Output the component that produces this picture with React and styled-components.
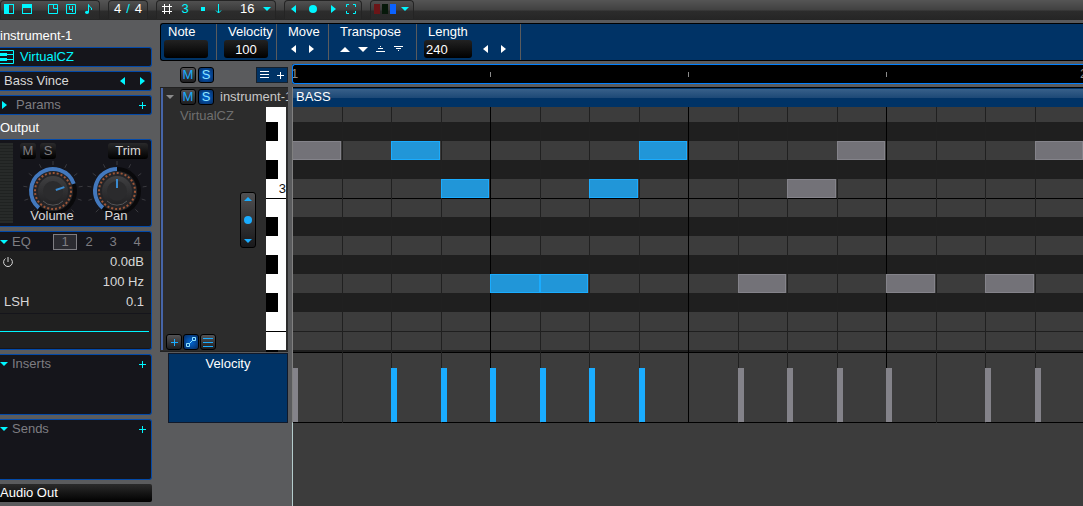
import React from 'react';
import styled, { createGlobalStyle, css, ThemeProvider } from 'styled-components';

const theme = {
  fontFamily: '"Liberation Sans", Arial, sans-serif',
  colorFrame: '#5a5b5d',
  colorNavy: '#003366',
  colorPanel: '#15151b',
  colorPanelBorder: '#0349a8',
  colorCyan: '#00f6ff',
  colorSky: '#1aacff',
  colorMuted: '#7e7d82',
  colorLane: '#3c3c3c',
  colorLaneDark: '#1f1f1f'
};

const GlobalStyle = createGlobalStyle`
  * {
    box-sizing: border-box;
  }

  body {
    margin: 0;
    background: #5a5b5d;
  }

  button,
  input,
  select {
    margin: 0;
    padding: 0;
    border: 0;
    background: none;
    color: inherit;
    font: inherit;
  }

  svg {
    display: block;
    flex: none;
  }
`;

const STEP_COUNT = 24;
const BEAT_WIDTH = 198;
const stepX = step => Math.round((step * BEAT_WIDTH) / 4);

const lanes = [
  { height: 15 },
  { height: 19, dark: true },
  { height: 19 },
  { height: 19, dark: true },
  { height: 20, line: '#000' },
  { height: 18 },
  { height: 19, dark: true },
  { height: 19 },
  { height: 19, dark: true },
  { height: 19 },
  { height: 19, dark: true },
  { height: 20, line: '#1f1f1f' },
  { height: 18 },
  { height: 2, dark: true }
];

const notes = [
  { step: 0, lane: 2 },
  { step: 2, lane: 2, active: true },
  { step: 3, lane: 4, active: true },
  { step: 4, lane: 9, active: true, tied: true },
  { step: 5, lane: 9, active: true },
  { step: 6, lane: 4, active: true },
  { step: 7, lane: 2, active: true },
  { step: 9, lane: 9 },
  { step: 10, lane: 4 },
  { step: 11, lane: 2 },
  { step: 12, lane: 9 },
  { step: 14, lane: 9 },
  { step: 15, lane: 2 }
];

const laneTop = index =>
  lanes.slice(0, index).reduce((sum, lane) => sum + lane.height, 0);

const App = styled.div`
  display: flex;
  flex-direction: column;
  min-height: 100vh;
  overflow: hidden;
  background: ${props => props.theme.colorFrame};
  color: #fff;
  font-family: ${props => props.theme.fontFamily};
  font-size: 13px;
  line-height: 16px;
`;

/* transport bar */

const TopBar = styled.header`
  display: flex;
  gap: 8px;
  height: 20px;
  background: linear-gradient(#555 0, #414141 10px, #2c2c2c 11px, #252525 20px);
`;

const ToolGroup = styled.div`
  display: flex;
  align-items: center;
  gap: ${props => props.$gap || 0}px;
  width: ${props => props.$width}px;
  height: 19px;
  padding: 0 0 2px ${props => props.$pad || 0}px;
  border: solid #242424;
  border-width: 1px 1px 0;
  border-radius: 4px 4px 0 0;
  background: linear-gradient(#505050, #3c3c3c 9px, #2c2c2c 10px, #292929);
  color: ${props => props.theme.colorCyan};
`;

const Cluster = styled.div`
  display: flex;
  align-items: center;
  gap: 8px;
`;

const ToolButton = styled.button`
  display: flex;
  align-items: center;
  justify-content: center;
  width: ${props => props.$width || 10}px;
  height: 16px;
  color: ${props => (props.$light ? '#fff' : 'inherit')};
`;

const White = styled.span`
  color: #fff;
`;

const GridSelect = styled.label`
  display: flex;
  align-items: center;
  gap: 7px;
  padding-left: 14px;

  select {
    width: 16px;
    appearance: none;
    color: #fff;
  }
`;

const Swatch = styled.span`
  width: 6px;
  height: 10px;
  background: ${props => props.$color};
`;

const DotMark = styled.i`
  width: 4px;
  height: 4px;
  background: currentColor;
`;

const Swatches = styled.button`
  display: flex;
  align-items: center;
  gap: 2px;
`;

/* page body */

const Body = styled.div`
  display: flex;
  flex: 1;
  gap: 8px;
`;

const Inspector = styled.aside`
  display: flex;
  flex-direction: column;
  gap: 4px;
  flex: none;
  width: 152px;
  padding: 7px 0 4px;
`;

const Heading = styled.div`
  height: 16px;
  line-height: 18px;
`;

const Panel = styled.section`
  height: ${props => props.$height}px;
  border: 1px solid ${props => props.theme.colorPanelBorder};
  border-left: 0;
  border-radius: 0 3px 3px 0;
  background: ${props => props.theme.colorPanel};
`;

const PanelRow = styled.div`
  display: flex;
  align-items: center;
  height: 18px;
  padding: 0 5px 0 ${props => props.$pad || 0}px;
  gap: ${props => props.$gap || 0}px;
  color: ${props => (props.$muted ? props.theme.colorMuted : '#d8d8d8')};
  line-height: 18px;
`;

const CyanButton = styled.button`
  display: flex;
  align-items: center;
  justify-content: center;
  width: ${props => props.$width || 8}px;
  height: 16px;
  color: ${props => (props.$light ? '#d8d8d8' : props.theme.colorCyan)};
`;

const NameButton = styled.button`
  color: ${props => props.theme.colorCyan};
`;

const Spring = styled.span`
  flex: 1;
`;

const OutputPanel = styled(Panel)`
  display: flex;
  gap: 7px;
  padding: 3px 3px 3px 0;
`;

const Meter = styled.div`
  width: 13px;
  background: repeating-linear-gradient(#272a29 0 2px, #1f2221 2px 3px);
`;

const OutputControls = styled.div`
  flex: 1;
`;

const ButtonRow = styled.div`
  display: flex;
  gap: 4px;
`;

const DarkButton = styled.button`
  width: ${props => props.$width || 16}px;
  height: 16px;
  border-radius: 3px;
  background: linear-gradient(#29292b, #000);
  color: ${props => (props.$width ? '#d8d8d8' : props.theme.colorMuted)};
  line-height: 16px;
`;

const Knobs = styled.div`
  display: flex;
  gap: 4px;
  padding: 2px 0 0 3px;
`;

const KnobLabel = styled.label`
  position: relative;
  width: 60px;
  text-align: center;
  color: #d8d8d8;
  line-height: 18px;

  svg {
    overflow: visible;
  }

  input {
    position: absolute;
    inset: 0;
    width: 100%;
    height: 100%;
    opacity: 0;
  }

  span {
    display: block;
    position: relative;
    margin-right: 2px;
  }
`;

const Band = styled.button`
  width: 24px;
  height: 16px;
  line-height: 14px;
  color: ${props => props.theme.colorMuted};
  ${props =>
    props.$active &&
    css`
      border: 1px solid #7e7d82;
      background: #2b2b31;
    `}
`;

const EqHeader = styled(PanelRow)`
  height: 19px;
  padding-right: 2px;
`;

const EqBody = styled.div`
  height: 62px;
  padding: 1px 7px 0 4px;
  background: #202020;
`;

const EqRow = styled.div`
  display: flex;
  align-items: center;
  justify-content: space-between;
  height: 20px;
  color: #d8d8d8;
`;

const EqCurve = styled.div`
  display: flex;
  align-items: center;
  height: 34px;
  margin-top: 1px;
  padding-right: 2px;
  background: #202020;

  hr {
    width: 100%;
    margin: 0;
    border: 0;
    border-top: 1px solid ${props => props.theme.colorCyan};
  }
`;

const AudioOut = styled.button`
  height: 18px;
  border-radius: 0 2px 2px 0;
  background: linear-gradient(#2b2b2b, #000);
  line-height: 18px;
  text-align: left;
`;

const Main = styled.main`
  display: flex;
  flex-direction: column;
  flex: 1;
  min-width: 0;
  padding-top: 3px;
`;

/* note edit bar */

const EditBar = styled.div`
  display: flex;
  height: 38px;
  border: 1px solid #000;
  border-right: 0;
  border-radius: 3px 0 0 3px;
  background: ${props => props.theme.colorNavy};
`;

const EditSection = styled.div`
  width: ${props => props.$width}px;
  padding: 0 3px;
  border-right: 1px solid ${props => props.theme.colorFrame};
`;

const EditLabel = styled.label`
  display: block;
  padding-left: ${props => props.$pad}px;
  white-space: nowrap;
`;

const EditInput = styled.input`
  display: block;
  width: ${props => props.$width || 44}px;
  height: 18px;
  margin-left: ${props => props.$indent || 0}px;
  padding: 0 2px;
  border-radius: 3px;
  background: linear-gradient(#222, #000);
  text-align: ${props => props.$align || 'center'};
`;

const EditButtons = styled.div`
  display: flex;
  align-items: center;
  height: 18px;
  padding-left: ${props => props.$indent || 0}px;
`;

const EditButton = styled.button`
  display: flex;
  align-items: center;
  justify-content: center;
  flex: none;
  width: 18px;
  height: 16px;
`;

/* tracks */

const Workspace = styled.div`
  display: grid;
  grid-template-columns: 128px minmax(0, 1fr);
  column-gap: 4px;
  flex: 1;
  padding-top: 3px;
`;

const TrackColumn = styled.div`
  display: flex;
  flex-direction: column;
`;

const MasterRow = styled.div`
  display: flex;
  align-items: center;
  gap: 2px;
  height: 20px;
  margin: 1px 0 2px;
  padding-left: 20px;
`;

const SquareButton = styled.button`
  display: flex;
  align-items: center;
  justify-content: center;
  flex: none;
  width: 16px;
  height: 16px;
  border: 1px solid #000;
  border-radius: 3px;
  background: ${props =>
    props.$lit
      ? 'radial-gradient(#0068d8, #073674 80%)'
      : 'linear-gradient(#535355, #1d1d1f)'};
  color: ${props => (props.$lit ? '#8fe4ff' : props.theme.colorSky)};
`;

const MenuButton = styled.button`
  display: flex;
  align-items: center;
  justify-content: center;
  gap: 6px;
  width: 32px;
  height: 16px;
  margin-left: auto;
  border: 1px solid #15202c;
  background: ${props => props.theme.colorNavy};
`;

const TrackPanel = styled.section`
  display: flex;
  height: 265px;
  padding: 0 2px 1px 1px;
  background: #2c2c2c;
  border: solid #222;
  border-width: 1px 0;
`;

const TrackInfo = styled.div`
  display: flex;
  flex-direction: column;
  flex: 1;
  min-width: 0;
  border-left: 2px solid #4665a8;
  padding: 1px 0 0 3px;
  color: #c8c8c8;
`;

const TrackTitle = styled.div`
  display: flex;
  align-items: center;
  gap: 2px;
  width: 122px;
  overflow: hidden;
  white-space: nowrap;

  span {
    padding-left: 4px;
  }
`;

const FoldButton = styled.button`
  display: flex;
  align-items: center;
  flex: none;
  width: 12px;
  height: 16px;
  color: #8b8b8b;
`;

const DeviceName = styled.div`
  padding: 3px 0 0 14px;
  color: #6f6f6f;
`;

const ZoomPad = styled.div`
  display: flex;
  flex-direction: column;
  align-items: center;
  justify-content: space-between;
  align-self: flex-end;
  width: 16px;
  height: 56px;
  margin: 68px 10px auto;
  padding: 4px 0;
  border: 1px solid #000;
  border-radius: 3px;
  background: linear-gradient(#505052, #19191b);
  color: ${props => props.theme.colorSky};
`;

const TrackTools = styled.div`
  display: flex;
  gap: 1px;
`;

const Keyboard = styled.div`
  flex: none;
  width: 20px;
  margin-top: 19px;
  background: #fff;
`;

const Key = styled.div`
  display: flex;
  align-items: center;
  justify-content: flex-end;
  width: ${props => (props.$dark ? 12 : 20)}px;
  height: ${props => props.$height}px;
  border-bottom: ${props => (props.$line ? '1px solid #000' : 0)};
  background: ${props => (props.$dark ? '#000' : '#fff')};
  color: #111;
`;

const VelocityLabel = styled.div`
  height: 70px;
  margin: 1px 0 0 8px;
  padding: 2px;
  border: 1px solid #10192a;
  background: ${props => props.theme.colorNavy};
  text-align: center;
`;

const Timeline = styled.div`
  position: relative;
  display: flex;
  flex-direction: column;
  background: ${props => props.theme.colorLane};
`;

const Ruler = styled.div`
  position: relative;
  height: 20px;
  overflow: hidden;
  border: 1px solid #0080ff;
  border-right: 0;
  border-radius: 3px 0 0 3px;
  background: #000;
  color: #8b8b8b;
`;

const RulerMark = styled.span`
  position: absolute;
  top: 1px;
  left: ${props => props.$x}px;
`;

const RulerTick = styled.i`
  position: absolute;
  top: 7px;
  left: ${props => props.$x - 1}px;
  width: 1px;
  height: 5px;
  background: #8b8b8b;
`;

const ClipHeader = styled.div`
  height: 23px;
  padding: 2px 0 0 4px;
  border-top: 3px solid ${props => props.theme.colorFrame};
  background: linear-gradient(
    #000 1px,
    #003366 1px 2px,
    #386089 2px,
    #1c4876 11px,
    #003366 11px
  );
`;

const Roll = styled.div`
  position: relative;
  overflow: hidden;
`;

const Lane = styled.div`
  height: ${props => props.$height}px;
  border-bottom: ${props => (props.$line ? `1px solid ${props.$line}` : 0)};
  background: ${props =>
    props.$dark ? props.theme.colorLaneDark : props.theme.colorLane};
`;

const VelocityLane = styled.div`
  height: 71px;
  border: solid #000;
  border-width: 1px 0;
`;

const StepLine = styled.i`
  position: absolute;
  top: 0;
  bottom: 0;
  left: ${props => props.$x}px;
  width: 1px;
  background: ${props => (props.$beat ? '#000' : '#202020')};
`;

const Note = styled.div`
  position: absolute;
  top: ${props => props.$y}px;
  left: ${props => props.$x}px;
  width: ${props => props.$width}px;
  height: 19px;
  border: 1px solid ${props => (props.$active ? '#1aacff' : '#84838a')};
  background: ${props => (props.$active ? '#2196d8' : '#737278')};
`;

const VelocityBar = styled.div`
  position: absolute;
  bottom: 1px;
  left: ${props => props.$x}px;
  width: 6px;
  height: 54px;
  background: ${props => (props.$active ? '#1aacff' : '#84838a')};
`;

const Playhead = styled.i`
  position: absolute;
  z-index: 1;
  top: 23px;
  bottom: 0;
  left: 0;
  width: 1px;
  background: linear-gradient(#808080 335px, #b4cccc 336px);
`;

/* glyphs */

const shapes = {
  left: [5, 8, '5,0 5,8 0,4'],
  right: [5, 8, '0,0 5,4 0,8'],
  up: [10, 5, '5,0 10,5 0,5'],
  down: [8, 4, '0,0 8,0 4,4'],
  upSmall: [8, 4, '4,0 8,4 0,4'],
  downWide: [10, 5, '0,0 10,0 5,5']
};

const Arrow = ({ shape }) => {
  const [w, h, points] = shapes[shape];
  return (
    <svg width={w} height={h} aria-hidden="true">
      <polygon points={points} fill="currentColor" />
    </svg>
  );
};

const Lines = ({ size = 10, d }) => (
  <svg
    width={size}
    height={size}
    fill="none"
    stroke="currentColor"
    aria-hidden="true"
  >
    <path d={d} />
  </svg>
);

const Dot = () => (
  <svg width="8" height="8" aria-hidden="true">
    <circle cx="4" cy="4" r="4" fill="currentColor" />
  </svg>
);

const Plus = () => <Lines size={8} d="M1 4.5H8M4.5 1V8" />;

const PanelIcon = ({ fill }) => (
  <svg width="10" height="10" aria-hidden="true">
    <rect x="0.5" y="0.5" width="9" height="9" fill="none" stroke="currentColor" />
    <path d={fill} fill="currentColor" />
  </svg>
);

const NoteIcon = () => (
  <svg width="8" height="10" aria-hidden="true">
    <path
      d="M3.5 8V0.5L4.5 2.5 6.5 4V6"
      fill="none"
      stroke="currentColor"
      strokeWidth="1"
    />
    <ellipse cx="2" cy="8.3" rx="2" ry="1.6" fill="currentColor" />
  </svg>
);

const KeysIcon = () => (
  <svg width="14" height="14" aria-hidden="true">
    <path
      d="M0 0.5H13.5V13.5H0M0 4.5H13M0 9.5H13"
      fill="none"
      stroke="currentColor"
    />
    <path d="M0 3h7v3H0zM0 8h7v3H0z" fill="currentColor" />
  </svg>
);

const polar = (angle, radius) => {
  const rad = (angle * Math.PI) / 180;
  return [30 + radius * Math.sin(rad), 30 - radius * Math.cos(rad)];
};

const Knob = ({ name, angle, value }) => {
  const [x0, y0] = polar(-140, 22);
  const [x1, y1] = polar(angle, 22);
  const [px, py] = polar(angle, 3);
  const [qx, qy] = polar(angle, 12);
  const ticks = Array.from({ length: 11 }, (_, i) => -135 + i * 27);

  return (
    <KnobLabel>
      <svg width="60" height="46" aria-hidden="true">
        <defs>
          <linearGradient id={`face-${name}`} x1="0" y1="0" x2="0" y2="1">
            <stop offset="0" stopColor="#404042" />
            <stop offset="1" stopColor="#202022" />
          </linearGradient>
        </defs>
        {ticks.map(tick => {
          const [ax, ay] = polar(tick, 26);
          const [bx, by] = polar(tick, 30);
          return (
            <line key={tick} x1={ax} y1={ay} x2={bx} y2={by} stroke="#3a3a3f" />
          );
        })}
        <circle cx="30" cy="30" r="24" fill="#09090b" />
        <circle cx="30" cy="30" r="20" fill="#242427" />
        <circle
          cx="30"
          cy="30"
          r="18"
          fill="none"
          stroke="#9c5638"
          strokeWidth="2"
          strokeDasharray="2 2"
        />
        <circle cx="30" cy="30" r="15" fill={`url(#face-${name})`} />
        <circle cx="30" cy="30" r="10" fill="#2b2b2d" />
        <path d="M20 40A14 14 0 0 0 40 40" fill="none" stroke="#555557" />
        <path
          d={`M${x0} ${y0}A22 22 0 ${angle > 40 ? 1 : 0} 1 ${x1} ${y1}`}
          fill="none"
          stroke="#4378bd"
          strokeWidth="4"
        />
        <line x1={px} y1={py} x2={qx} y2={qy} stroke="#3a8ad0" strokeWidth="2" />
      </svg>
      <input type="range" min="0" max="100" defaultValue={value} />
      <span>{name}</span>
    </KnobLabel>
  );
};

const Transport = () => (
  <TopBar>
    <ToolGroup $width={100} $pad={3} $gap={16}>
      <Cluster>
        <ToolButton aria-label="Side panel">
          <PanelIcon fill="M0 0h5v10H0z" />
        </ToolButton>
        <ToolButton aria-label="Top panel">
          <PanelIcon fill="M0 0h10v4H0z" />
        </ToolButton>
      </Cluster>
      <Cluster>
        <ToolButton aria-label="Clip view">
          <Lines d="M0.5 0.5H9.5V9.5H0.5ZM5.5 1V4.5H9" />
        </ToolButton>
        <ToolButton aria-label="Beat view">
          <Lines d="M0.5 0.5H9.5V9.5H0.5ZM3.5 2V5.5H7M6.5 2V8" />
        </ToolButton>
        <ToolButton aria-label="Note view">
          <NoteIcon />
        </ToolButton>
      </Cluster>
    </ToolGroup>
    <ToolGroup $width={40} $pad={5} $gap={5}>
      <White>4</White>
      <span>/</span>
      <White>4</White>
    </ToolGroup>
    <ToolGroup $width={120} $pad={1}>
      <ToolButton $width={18} $light aria-label="Grid">
        <Lines d="M2.5 0V10M7.5 0V10M0 2.5H10M0 7.5H10" />
      </ToolButton>
      <ToolButton $width={18}>3</ToolButton>
      <ToolButton $width={18} aria-label="Dotted">
        <DotMark />
      </ToolButton>
      <ToolButton $width={14} aria-label="Snap">
        <Lines d="M4.5 0V9M2 6.5L4.5 9L7 6.5" />
      </ToolButton>
      <GridSelect>
        <select aria-label="Grid size" defaultValue="16">
          <option>16</option>
          <option>32</option>
        </select>
        <Arrow shape="down" />
      </GridSelect>
    </ToolGroup>
    <ToolGroup $width={78} $gap={4}>
      <ToolButton $width={16} aria-label="Back">
        <Arrow shape="left" />
      </ToolButton>
      <ToolButton $width={16} aria-label="Center">
        <Dot />
      </ToolButton>
      <ToolButton $width={16} aria-label="Forward">
        <Arrow shape="right" />
      </ToolButton>
      <ToolButton $width={12} aria-label="Fit">
        <Lines d="M0.5 3V0.5H3M7 0.5H9.5V3M9.5 7V9.5H7M3 9.5H0.5V7" />
      </ToolButton>
    </ToolGroup>
    <ToolGroup $width={44} $pad={3} $gap={5}>
      <Swatches aria-label="Colors">
        <Swatch $color="#6b1517" />
        <Swatch $color="#06190a" />
        <Swatch $color="#0b62ff" />
      </Swatches>
      <Arrow shape="down" />
    </ToolGroup>
  </TopBar>
);

const ListPanel = ({ title }) => (
  <Panel $height={61}>
    <PanelRow $muted $gap={4}>
      <CyanButton aria-label={`Fold ${title}`}>
        <Arrow shape="down" />
      </CyanButton>
      {title}
      <Spring />
      <CyanButton aria-label={`Add ${title}`}>
        <Plus />
      </CyanButton>
    </PanelRow>
  </Panel>
);

const InspectorPanel = () => (
  <Inspector>
    <Heading>instrument-1</Heading>
    <Panel $height={20}>
      <PanelRow $gap={6}>
        <CyanButton $width={14} aria-label="Open instrument">
          <KeysIcon />
        </CyanButton>
        <NameButton>VirtualCZ</NameButton>
      </PanelRow>
    </Panel>
    <Panel $height={20}>
      <PanelRow $pad={4} $gap={12}>
        Bass Vince
        <Spring />
        <CyanButton aria-label="Previous preset">
          <Arrow shape="left" />
        </CyanButton>
        <CyanButton aria-label="Next preset">
          <Arrow shape="right" />
        </CyanButton>
      </PanelRow>
    </Panel>
    <Panel $height={20}>
      <PanelRow $muted $gap={8}>
        <CyanButton aria-label="Unfold params">
          <Arrow shape="right" />
        </CyanButton>
        Params
        <Spring />
        <CyanButton aria-label="Add param">
          <Plus />
        </CyanButton>
      </PanelRow>
    </Panel>
    <Heading>Output</Heading>
    <OutputPanel $height={88}>
      <Meter />
      <OutputControls>
        <ButtonRow>
          <DarkButton>M</DarkButton>
          <DarkButton>S</DarkButton>
          <Spring />
          <DarkButton $width={40}>Trim</DarkButton>
        </ButtonRow>
        <Knobs>
          <Knob name="Volume" angle={71} value={75} />
          <Knob name="Pan" angle={0} value={50} />
        </Knobs>
      </OutputControls>
    </OutputPanel>
    <Panel $height={119}>
      <EqHeader $muted $gap={4}>
        <CyanButton aria-label="Fold EQ">
          <Arrow shape="down" />
        </CyanButton>
        EQ
        <Spring />
        <div>
          <Band $active>1</Band>
          <Band>2</Band>
          <Band>3</Band>
          <Band>4</Band>
        </div>
      </EqHeader>
      <EqBody>
        <EqRow>
          <CyanButton $light aria-label="EQ power">
            <Lines d="M5 0V5M2.5 1.5A4.4 4.4 0 1 0 7.5 1.5" />
          </CyanButton>
          0.0dB
        </EqRow>
        <EqRow>
          <span />
          100 Hz
        </EqRow>
        <EqRow>
          <span>LSH</span>
          0.1
        </EqRow>
      </EqBody>
      <EqCurve>
        <hr />
      </EqCurve>
    </Panel>
    <ListPanel title="Inserts" />
    <ListPanel title="Sends" />
    <AudioOut>Audio Out</AudioOut>
  </Inspector>
);

const NoteEditBar = () => (
  <EditBar>
    <EditSection $width={56}>
      <EditLabel $pad={4} htmlFor="note">
        Note
      </EditLabel>
      <EditInput id="note" />
    </EditSection>
    <EditSection $width={60}>
      <EditLabel $pad={8} htmlFor="velocity">
        Velocity
      </EditLabel>
      <EditInput id="velocity" $indent={4} defaultValue="100" />
    </EditSection>
    <EditSection $width={52}>
      <EditLabel as="div" $pad={8}>
        Move
      </EditLabel>
      <EditButtons $indent={4}>
        <EditButton aria-label="Move left">
          <Arrow shape="left" />
        </EditButton>
        <EditButton aria-label="Move right">
          <Arrow shape="right" />
        </EditButton>
      </EditButtons>
    </EditSection>
    <EditSection $width={88}>
      <EditLabel as="div" $pad={8}>
        Transpose
      </EditLabel>
      <EditButtons $indent={4}>
        <EditButton aria-label="Up">
          <Arrow shape="up" />
        </EditButton>
        <EditButton aria-label="Down">
          <Arrow shape="downWide" />
        </EditButton>
        <EditButton aria-label="Octave up">
          <Lines d="M0 7.5H9M2 4.5H7M4 2.5H5" />
        </EditButton>
        <EditButton aria-label="Octave down">
          <Lines d="M0 2.5H9M2 4.5H7M4 6.5H5" />
        </EditButton>
      </EditButtons>
    </EditSection>
    <EditSection $width={104}>
      <EditLabel $pad={8} htmlFor="length">
        Length
      </EditLabel>
      <EditButtons $indent={4}>
        <EditInput id="length" $width={48} $align="left" defaultValue="240" />
        <Spring />
        <EditButton aria-label="Shorter">
          <Arrow shape="left" />
        </EditButton>
        <EditButton aria-label="Longer">
          <Arrow shape="right" />
        </EditButton>
        <Spring />
      </EditButtons>
    </EditSection>
  </EditBar>
);

const StepLines = () =>
  Array.from({ length: STEP_COUNT }, (_, i) => i + 1).map(step => (
    <StepLine key={step} $x={stepX(step)} $beat={step % 4 === 0} />
  ));

const Tracks = () => (
  <TrackColumn>
    <MasterRow>
      <SquareButton>M</SquareButton>
      <SquareButton $lit>S</SquareButton>
      <MenuButton aria-label="Track menu">
        <Lines d="M0 1.5H9M0 4.5H9M0 7.5H9" />
        <Plus />
      </MenuButton>
    </MasterRow>
    <TrackPanel>
      <TrackInfo>
        <TrackTitle>
          <FoldButton aria-label="Fold track">
            <Arrow shape="down" />
          </FoldButton>
          <SquareButton>M</SquareButton>
          <SquareButton $lit>S</SquareButton>
          <span>instrument-1</span>
        </TrackTitle>
        <DeviceName>VirtualCZ</DeviceName>
        <ZoomPad>
          <Arrow shape="upSmall" />
          <Dot />
          <Arrow shape="down" />
        </ZoomPad>
        <TrackTools>
          <SquareButton aria-label="Add lane">
            <Plus />
          </SquareButton>
          <SquareButton $lit aria-label="Automation">
            <Lines d="M0.5 6.5H3.5V9.5H0.5ZM6.5 0.5H9.5V3.5H6.5ZM3.5 6.5L6.5 3.5" />
          </SquareButton>
          <SquareButton aria-label="Lanes">
            <Lines d="M0 1.5H10M0 5.5H10M0 9.5H10" />
          </SquareButton>
        </TrackTools>
      </TrackInfo>
      <Keyboard>
        {lanes.map((lane, i) => (
          <Key key={i} $height={lane.height} $dark={lane.dark} $line={lane.line}>
            {i === 4 && '3'}
          </Key>
        ))}
      </Keyboard>
    </TrackPanel>
    <VelocityLabel>Velocity</VelocityLabel>
  </TrackColumn>
);

const PianoRoll = () => (
  <Timeline>
    <Ruler>
      <RulerMark $x={-2}>1</RulerMark>
      {[1, 2, 3].map(beat => (
        <RulerTick key={beat} $x={beat * BEAT_WIDTH} />
      ))}
      <RulerMark $x={4 * BEAT_WIDTH - 5}>2</RulerMark>
    </Ruler>
    <ClipHeader>BASS</ClipHeader>
    <Playhead />
    <Roll>
      {lanes.map((lane, i) => (
        <Lane key={i} $height={lane.height} $dark={lane.dark} $line={lane.line} />
      ))}
      <StepLines />
      {notes.map(note => (
        <Note
          key={note.step}
          $x={stepX(note.step)}
          $y={laneTop(note.lane)}
          $width={stepX(note.step + 1) - stepX(note.step) - (note.tied ? 0 : 1)}
          $active={note.active}
        />
      ))}
    </Roll>
    <Roll>
      <VelocityLane />
      <StepLines />
      {notes.map(note => (
        <VelocityBar key={note.step} $x={stepX(note.step)} $active={note.active} />
      ))}
    </Roll>
  </Timeline>
);

export default () => (
  <ThemeProvider theme={theme}>
    <GlobalStyle />
    <App>
      <Transport />
      <Body>
        <InspectorPanel />
        <Main>
          <NoteEditBar />
          <Workspace>
            <Tracks />
            <PianoRoll />
          </Workspace>
        </Main>
      </Body>
    </App>
  </ThemeProvider>
);
